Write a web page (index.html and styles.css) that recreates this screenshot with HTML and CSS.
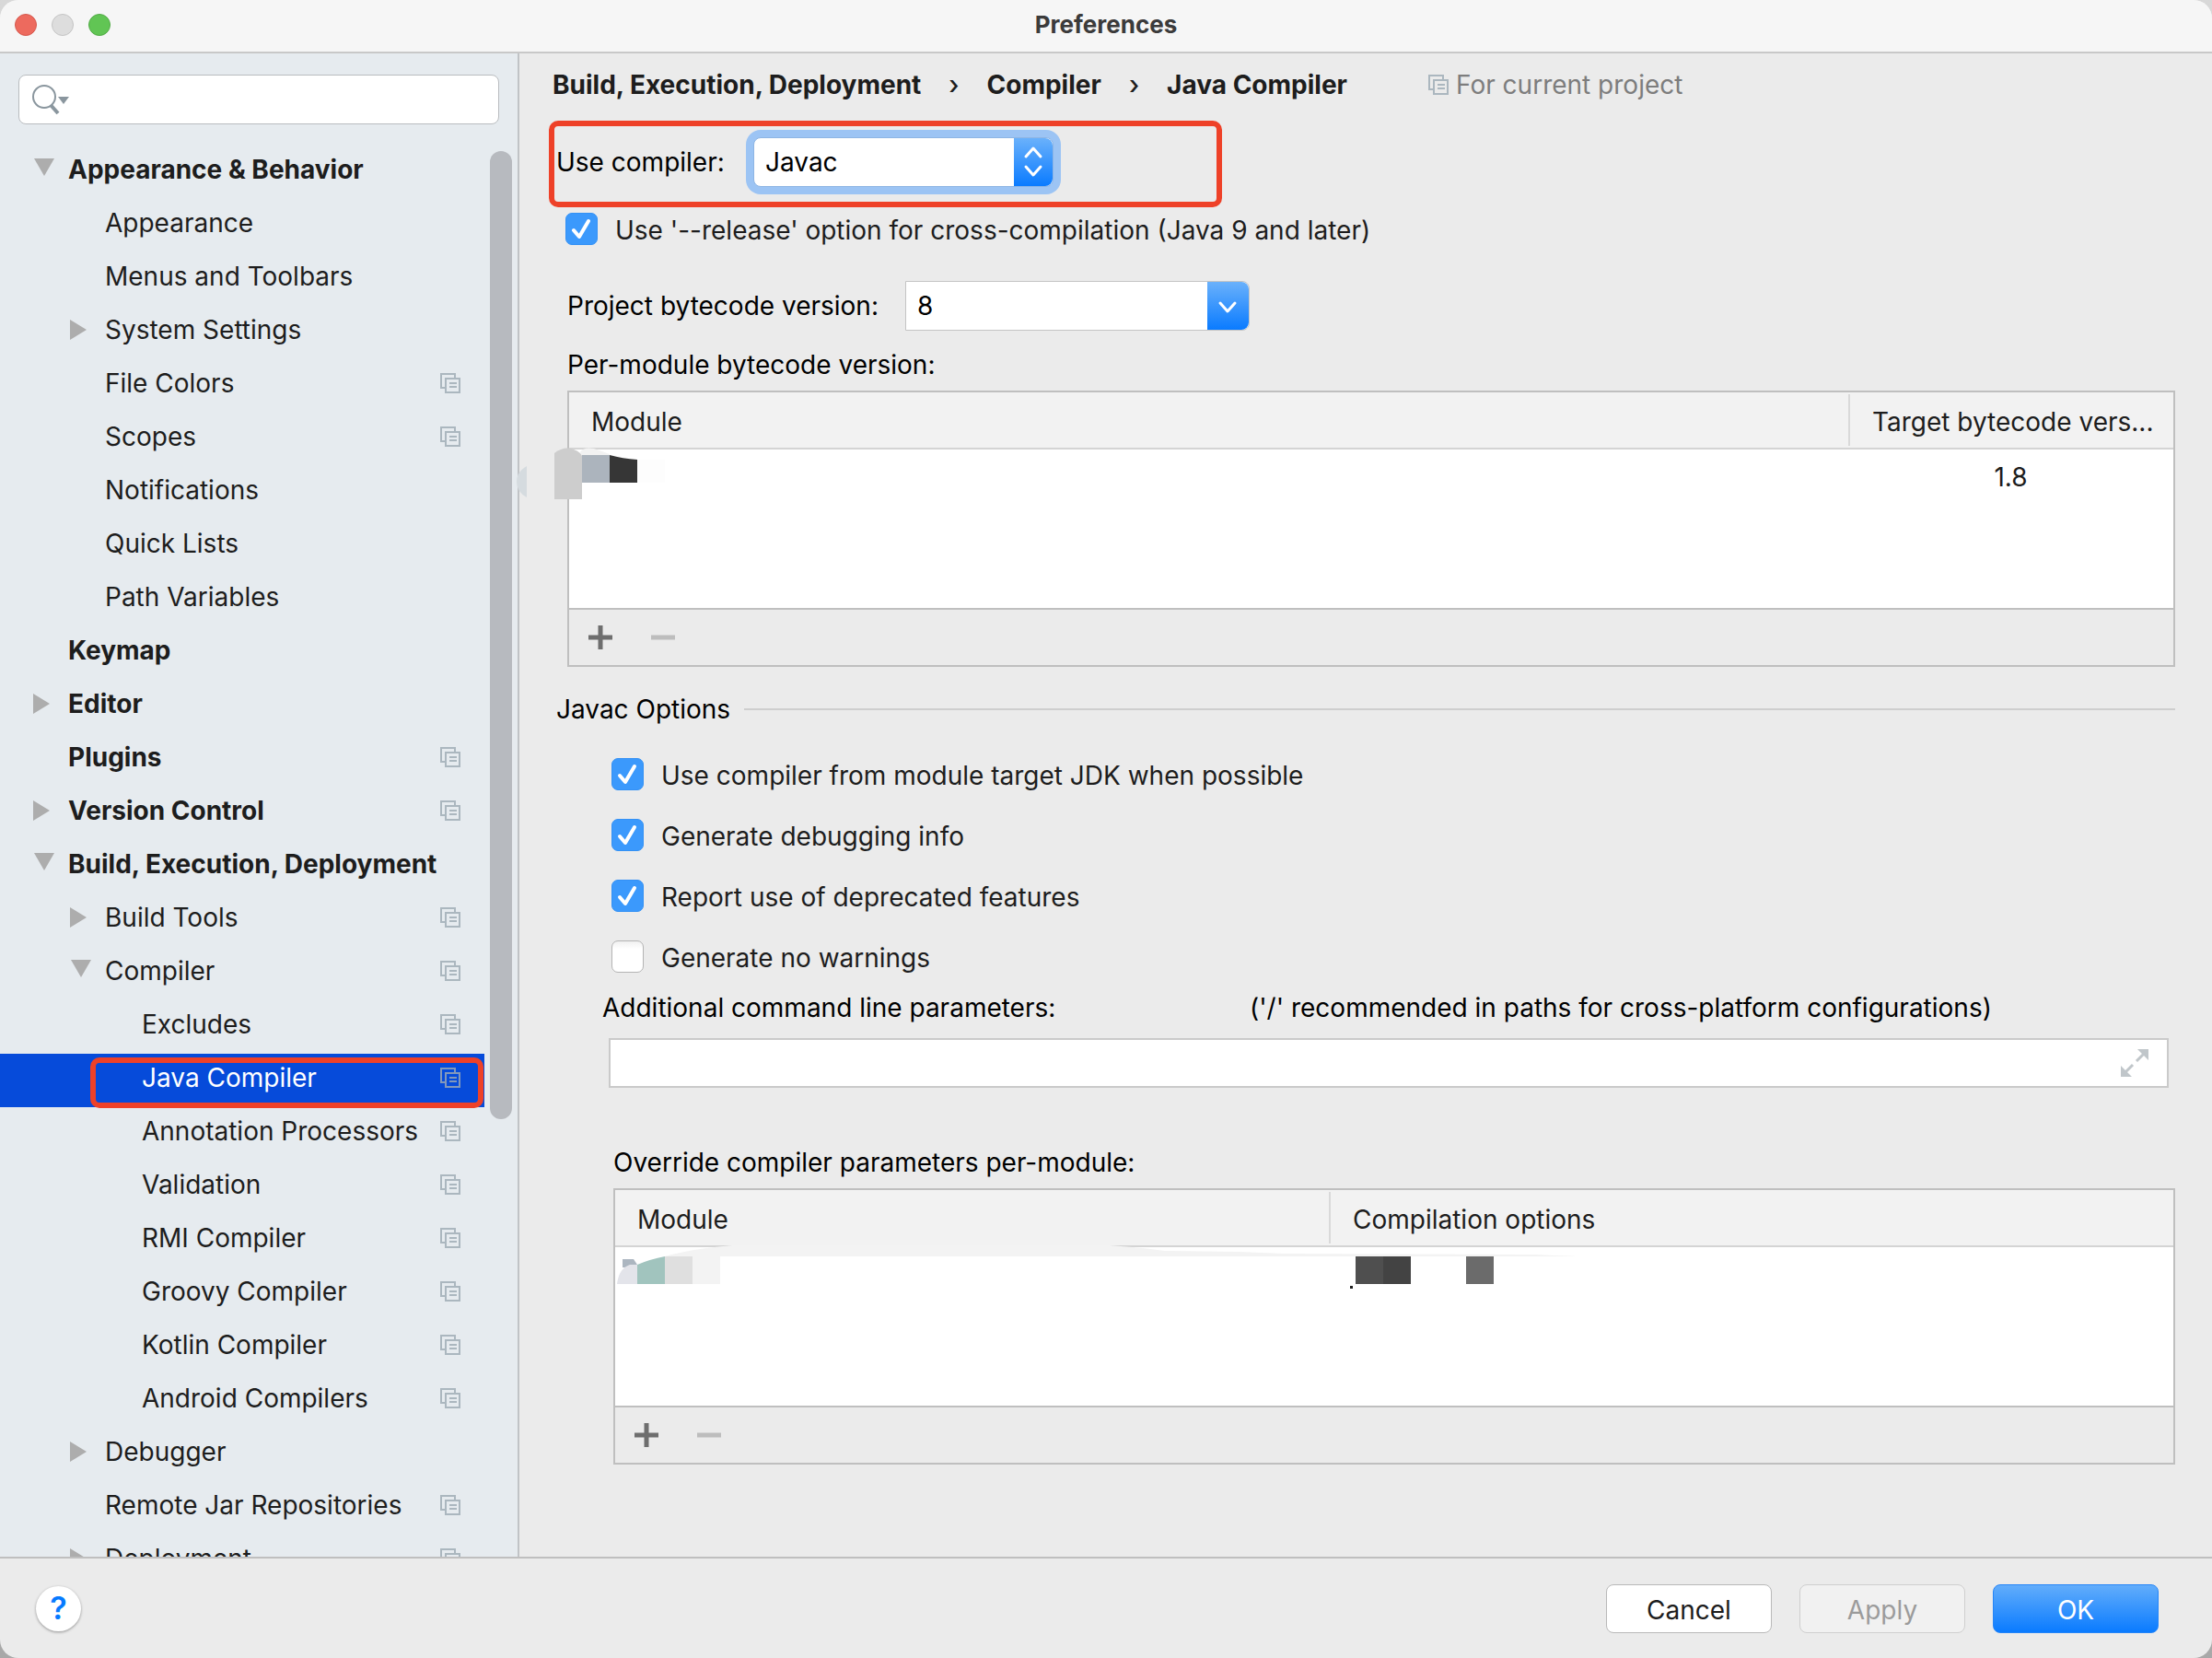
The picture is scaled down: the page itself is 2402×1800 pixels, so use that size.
FILE: index.html
```html
<!DOCTYPE html>
<html lang="en">
<head>
<meta charset="utf-8">
<title>Preferences</title>
<link rel="stylesheet" href="styles.css">
</head>
<body>
<svg class="defs" aria-hidden="true">
  <symbol id="copy" viewBox="0 0 22 22"><path d="M5 16H1V1h15v4" fill="none" stroke="currentColor" stroke-width="2"/><path d="M6 6h15v15H6z" fill="none" stroke="currentColor" stroke-width="2"/><path d="M10 11h8M10 15h8" stroke="currentColor" stroke-width="2"/></symbol>
  <symbol id="open" viewBox="0 0 24 24"><path d="M2 0h22L13 19z" fill="currentColor"/></symbol>
  <symbol id="closed" viewBox="0 0 24 24"><path d="M1 1v22l18-11z" fill="currentColor"/></symbol>
  <symbol id="check" viewBox="0 0 35 35"><path d="M9 19l6 7L25 9" fill="none" stroke="currentColor" stroke-width="4" stroke-linecap="round" stroke-linejoin="round"/></symbol>
  <symbol id="plus" viewBox="0 0 26 26"><path d="M13 0v26M0 13h26" stroke="currentColor" stroke-width="5"/></symbol>
  <symbol id="minus" viewBox="0 0 26 26"><path d="M0 13h26" stroke="currentColor" stroke-width="5"/></symbol>
</svg>
<div class="window">
  <header class="titlebar">
    <div class="lights"><button class="light close" aria-label="Close"></button><button class="light minimize" aria-label="Minimize"></button><button class="light zoom" aria-label="Zoom"></button></div>
    <h1 class="title">Preferences</h1>
  </header>
  <div class="content">
    <aside class="sidebar">
      <div class="search">
        <svg class="search-icon" viewBox="0 0 40 34" aria-hidden="true"><circle cx="13" cy="14" r="12" fill="none" stroke="#8a969e" stroke-width="2"/><path d="M20 23l8 9" stroke="#8a969e" stroke-width="4"/><path d="M28 14h12l-6 8z" fill="#8a969e"/></svg>
        <input class="search-input" type="text" aria-label="Search settings">
      </div>
      <nav class="tree" aria-label="Settings">
        <a class="row top" href="#"><svg class="twisty"><use href="#open"/></svg><span class="name">Appearance &amp; Behavior</span></a>
        <a class="row sub" href="#"><span class="twisty"></span><span class="name">Appearance</span></a>
        <a class="row sub" href="#"><span class="twisty"></span><span class="name">Menus and Toolbars</span></a>
        <a class="row sub" href="#"><svg class="twisty"><use href="#closed"/></svg><span class="name">System Settings</span></a>
        <a class="row sub" href="#"><span class="twisty"></span><span class="name">File Colors</span><svg class="copy"><use href="#copy"/></svg></a>
        <a class="row sub" href="#"><span class="twisty"></span><span class="name">Scopes</span><svg class="copy"><use href="#copy"/></svg></a>
        <a class="row sub" href="#"><span class="twisty"></span><span class="name">Notifications</span></a>
        <a class="row sub" href="#"><span class="twisty"></span><span class="name">Quick Lists</span></a>
        <a class="row sub" href="#"><span class="twisty"></span><span class="name">Path Variables</span></a>
        <a class="row top" href="#"><span class="twisty"></span><span class="name">Keymap</span></a>
        <a class="row top" href="#"><svg class="twisty"><use href="#closed"/></svg><span class="name">Editor</span></a>
        <a class="row top" href="#"><span class="twisty"></span><span class="name">Plugins</span><svg class="copy"><use href="#copy"/></svg></a>
        <a class="row top" href="#"><svg class="twisty"><use href="#closed"/></svg><span class="name">Version Control</span><svg class="copy"><use href="#copy"/></svg></a>
        <a class="row top" href="#"><svg class="twisty"><use href="#open"/></svg><span class="name">Build, Execution, Deployment</span></a>
        <a class="row sub" href="#"><svg class="twisty"><use href="#closed"/></svg><span class="name">Build Tools</span><svg class="copy"><use href="#copy"/></svg></a>
        <a class="row sub" href="#"><svg class="twisty"><use href="#open"/></svg><span class="name">Compiler</span><svg class="copy"><use href="#copy"/></svg></a>
        <a class="row leaf" href="#"><span class="twisty"></span><span class="name">Excludes</span><svg class="copy"><use href="#copy"/></svg></a>
        <a class="row leaf selected" href="#" aria-current="page"><span class="twisty"></span><span class="name">Java Compiler</span><svg class="copy"><use href="#copy"/></svg><span class="marker"></span></a>
        <a class="row leaf" href="#"><span class="twisty"></span><span class="name">Annotation Processors</span><svg class="copy"><use href="#copy"/></svg></a>
        <a class="row leaf" href="#"><span class="twisty"></span><span class="name">Validation</span><svg class="copy"><use href="#copy"/></svg></a>
        <a class="row leaf" href="#"><span class="twisty"></span><span class="name">RMI Compiler</span><svg class="copy"><use href="#copy"/></svg></a>
        <a class="row leaf" href="#"><span class="twisty"></span><span class="name">Groovy Compiler</span><svg class="copy"><use href="#copy"/></svg></a>
        <a class="row leaf" href="#"><span class="twisty"></span><span class="name">Kotlin Compiler</span><svg class="copy"><use href="#copy"/></svg></a>
        <a class="row leaf" href="#"><span class="twisty"></span><span class="name">Android Compilers</span><svg class="copy"><use href="#copy"/></svg></a>
        <a class="row sub" href="#"><svg class="twisty"><use href="#closed"/></svg><span class="name">Debugger</span></a>
        <a class="row sub" href="#"><span class="twisty"></span><span class="name">Remote Jar Repositories</span><svg class="copy"><use href="#copy"/></svg></a>
        <a class="row sub" href="#"><svg class="twisty"><use href="#closed"/></svg><span class="name">Deployment</span><svg class="copy"><use href="#copy"/></svg></a>
        <span class="scroll-thumb"></span>
      </nav>
    </aside>
    <main class="panel">
      <div class="heading">
        <nav class="crumbs" aria-label="Breadcrumb"><span>Build, Execution, Deployment</span><span class="sep">›</span><span>Compiler</span><span class="sep">›</span><span>Java Compiler</span></nav>
        <span class="scope"><svg class="copy"><use href="#copy"/></svg>For current project</span>
      </div>
      <div class="compiler">
        <label for="compiler">Use compiler:</label>
        <span class="combo focused">
          <select id="compiler"><option>Javac</option></select>
          <svg class="combo-button" viewBox="0 0 42 52" aria-hidden="true"><path d="M13 20l8-9 8 9M13 31l8 9 8-9" fill="none" stroke="#fff" stroke-width="3" stroke-linecap="round" stroke-linejoin="round"/></svg>
        </span>
        <span class="marker"></span>
      </div>
      <div class="general">
        <label class="check"><span class="box"><input type="checkbox" checked><svg><use href="#check"/></svg></span><span class="check-text">Use '--release' option for cross-compilation (Java 9 and later)</span></label>
        <div class="version">
          <label for="bytecode">Project bytecode version:</label>
          <span class="combo">
            <select id="bytecode"><option>8</option></select>
            <svg class="combo-button" viewBox="0 0 45 52" aria-hidden="true"><path d="M14 23l8 9 8-9" fill="none" stroke="#fff" stroke-width="3" stroke-linecap="round" stroke-linejoin="round"/></svg>
          </span>
        </div>
        <p class="caption">Per-module bytecode version:</p>
        <div class="grid">
          <div class="grid-body">
            <table class="bytecode-table">
              <thead><tr><th><span>Module</span></th><th class="target"><span>Target bytecode vers...</span></th></tr></thead>
              <tbody><tr><td></td><td class="value">1.8</td></tr></tbody>
            </table>
          </div>
          <div class="toolbar"><button aria-label="Add"><svg><use href="#plus"/></svg></button><button aria-label="Remove" disabled><svg><use href="#minus"/></svg></button></div>
          <svg class="mosaic" width="166" height="56" viewBox="0 0 166 56" aria-hidden="true"><path d="M12 20Q1 26 1 37T12 54z" fill="#d5dbdf"/><path d="M42 56V6Q56-5 70 6l2 2v48z" fill="#cdcdcd"/><path d="M70 5Q73-1 85 1l17 6v2H72z" fill="#f2f2f2"/><path d="M72 8h30v30H72z" fill="#acb4bd"/><path d="M102 8q14 4 30 5v25h-30z" fill="#363636"/><path d="M132 13h30v25h-30z" fill="#fdfdfd"/></svg>
        </div>
      </div>
      <section class="options">
        <h2 class="legend"><span>Javac Options</span></h2>
        <div class="checks">
          <label class="check"><span class="box"><input type="checkbox" checked><svg><use href="#check"/></svg></span><span class="check-text">Use compiler from module target JDK when possible</span></label>
          <label class="check"><span class="box"><input type="checkbox" checked><svg><use href="#check"/></svg></span><span class="check-text">Generate debugging info</span></label>
          <label class="check"><span class="box"><input type="checkbox" checked><svg><use href="#check"/></svg></span><span class="check-text">Report use of deprecated features</span></label>
          <label class="check"><span class="box"><input type="checkbox"></span><span class="check-text">Generate no warnings</span></label>
        </div>
        <div class="params-head"><label for="params">Additional command line parameters:</label><span>('/' recommended in paths for cross-platform configurations)</span></div>
        <div class="params">
          <input id="params" type="text">
          <button class="expand" aria-label="Expand"><svg viewBox="0 0 30 30"><path d="M18 0h12v12zM0 18v12h12z" fill="#c0c6ca"/><path d="M26 4l-9 9M4 26l9-9" stroke="#c0c6ca" stroke-width="3"/></svg></button>
        </div>
        <div class="override">
          <p class="caption">Override compiler parameters per-module:</p>
          <div class="grid">
            <div class="grid-body">
              <table class="override-table">
                <thead><tr><th class="module"><span>Module</span></th><th><span>Compilation options</span></th></tr></thead>
                <tbody><tr><td></td><td></td></tr></tbody>
              </table>
            </div>
            <div class="toolbar"><button aria-label="Add"><svg><use href="#plus"/></svg></button><button aria-label="Remove" disabled><svg><use href="#minus"/></svg></button></div>
            <svg class="mosaic wide" width="1040" height="50" viewBox="0 0 1040 50" aria-hidden="true"><path d="M52 12Q80 4 125 0h410q30 2 60 6l80 1 50 2 270 1q25 1 50 2z" fill="#f3f3f3"/><path d="M6 15h12l6 9H6z" fill="#acb6c0"/><path d="M0 42Q2 25 14 21h8v21z" fill="#e3e4ea"/><path d="M22 21q14-6 30-9v30H22z" fill="#a1c4be"/><path d="M52 12h30v30H52z" fill="#dfdfdf"/><path d="M82 12h30v30H82z" fill="#f3f3f3"/><path d="M802 12h30v30h-30z" fill="#4f4f4f"/><path d="M832 12h30v30h-30z" fill="#434343"/><path d="M922 12h30v30h-30z" fill="#6b6b6b"/><path d="M796 44h3v3h-3z" fill="#1d1d1d"/></svg>
          </div>
        </div>
      </section>
    </main>
  </div>
  <footer class="footer">
    <button class="help" aria-label="Help">?</button>
    <button class="button">Cancel</button>
    <button class="button" disabled>Apply</button>
    <button class="button primary">OK</button>
  </footer>
</div>
</body>
</html>
```
FILE: styles.css
```css
* { box-sizing: border-box; }
body {
  margin: 0;
  background: linear-gradient(#d8d8d8, #a8a8a8);
  color: #000;
  font: 28px/36px Inter, "Liberation Sans", sans-serif;
}
button, input, select { font: inherit; color: inherit; }
h1, h2, p { margin: 0; font: inherit; }
.defs { display: none; }
svg { display: block; }

.window {
  display: flex;
  flex-direction: column;
  height: 100vh;
  min-height: 600px;
  border-radius: 20px;
  overflow: hidden;
  background: #ebebeb;
}

/* Title bar */
.titlebar {
  display: grid;
  grid-template-columns: 1fr auto 1fr;
  align-items: center;
  height: 58px;
  padding: 0 16px 2px;
  background: #f6f6f6;
  border-bottom: 2px solid #c8c8c8;
}
.lights { display: flex; gap: 16px; }
.light {
  width: 24px;
  height: 24px;
  padding: 0;
  border: 1px solid;
  border-radius: 50%;
}
.close { background: #ed6a5e; border-color: #d5594e; }
.minimize { background: #dddddd; border-color: #c4c4c4; }
.zoom { background: #61c554; border-color: #52aa46; }
.title { font-size: 26px; font-weight: 700; color: #3b3b3b; }

.content { display: flex; flex: 1; min-height: 0; }

/* Sidebar */
.sidebar {
  display: flex;
  flex-direction: column;
  width: 564px;
  flex: none;
  padding-top: 23px;
  background: #e6ebef;
  border-right: 2px solid #c0c3c6;
}
.search {
  display: flex;
  align-items: center;
  gap: 8px;
  height: 54px;
  margin: 0 20px;
  padding: 0 14px;
  background: #fff;
  border: 1px solid #b9bcbf;
  border-radius: 8px;
}
.search-icon { width: 40px; height: 34px; flex: none; }
.search-input { flex: 1; min-width: 0; border: 0; outline: 0; background: none; }
.tree {
  position: relative;
  flex: 1;
  min-height: 0;
  margin-top: 23px;
  overflow: hidden;
}
.row {
  position: relative;
  display: flex;
  align-items: center;
  height: 58px;
  margin-right: 36px;
  padding: 0 26px 6px 35px;
  color: #1d1d1d;
  text-decoration: none;
  white-space: nowrap;
}
.row.top { font-weight: 700; }
.row.sub { padding-left: 75px; }
.row.leaf { padding-left: 115px; }
.row.selected { background: #064bda; color: #fff; }
.twisty { width: 24px; height: 24px; flex: none; margin-right: 15px; color: #adadad; }
.name { flex: 1; }
.copy { width: 22px; height: 22px; flex: none; color: #abb7bf; }
.selected .copy { color: #8298bb; }
.marker {
  position: absolute;
  inset: 0 0 -4px;
  border: 6px solid #ee4128;
  border-radius: 10px;
  pointer-events: none;
}
.row .marker { inset: 4px 1px -1px 98px; }
.scroll-thumb {
  position: absolute;
  top: 6px;
  right: 6px;
  width: 24px;
  height: 68.6%;
  border-radius: 12px;
  background: #b7babf;
}

/* Settings panel */
.panel { flex: 1; min-width: 0; padding: 0 40px 0 32px; }
.heading { display: flex; align-items: center; gap: 88px; height: 68px; padding-left: 4px; }
.crumbs { display: flex; gap: 30px; font-weight: 700; color: #1d1d1d; }
.sep { font-weight: 500; }
.scope { display: flex; align-items: center; gap: 8px; color: #7d7d7d; }
.compiler {
  position: relative;
  display: flex;
  align-items: center;
  gap: 28px;
  width: 731px;
  height: 90px;
  margin-top: 5px;
  padding-left: 8px;
}
.compiler label { min-width: 186px; }
.combo {
  display: flex;
  width: 374px;
  height: 54px;
  border: 1px solid #c4c4c4;
  border-radius: 0 8px 8px 0;
  background: #fff;
}
.combo select {
  flex: 1;
  min-width: 0;
  padding: 0 12px;
  border: 0;
  outline: 0;
  appearance: none;
  background: none;
}
.combo-button {
  width: 45px;
  height: 52px;
  flex: none;
  border-radius: 0 8px 8px 0;
  background: linear-gradient(#6ab1fb, #0a7bff);
}
.combo.focused {
  width: 326px;
  border-radius: 8px;
  border-color: #8db5e4;
  box-shadow: 0 0 0 8px #9cc4f4;
}
.focused .combo-button { width: 42px; }

.check { display: flex; align-items: center; gap: 19px; height: 36px; color: #1d1d1d; }
.box { display: grid; width: 35px; height: 35px; }
.box > * { grid-area: 1 / 1; width: 35px; height: 35px; }
.box svg { color: #fff; pointer-events: none; }
.box input {
  margin: 0;
  appearance: none;
  border: 1px solid #b4b4b4;
  border-radius: 7px;
  background: linear-gradient(#f0f0f0, #fff 8px);
}
.box input:checked { background: #3b99fc; border-color: #3491f5; }
.check-text { padding-top: 4px; }

.general { padding: 9px 0 0 20px; }
.general .check { margin-left: -2px; }
.version { display: flex; align-items: center; gap: 20px; height: 54px; margin-top: 39px; }
.version label { min-width: 347px; }
.version .combo { margin-right: auto; }
.general .caption { margin-top: 19px; }

.grid {
  position: relative;
  margin-top: 10px;
  border: 2px solid #bfbfbf;
}
.grid-body { height: 236px; background: #fff; border-bottom: 2px solid #bfbfbf; }
table { width: 100%; border-collapse: separate; border-spacing: 0; table-layout: fixed; color: #1d1d1d; }
th {
  height: 62px;
  padding: 2px 0;
  font-weight: 400;
  text-align: left;
  white-space: nowrap;
  background: #f2f2f2;
  border-bottom: 2px solid #d4d4d4;
}
th span { display: block; padding: 12px 0 8px 24px; }
th + th span { border-left: 2px solid #d9d9d9; }
td { height: 60px; padding: 0; }
.target { width: 353px; }
.module { width: 775px; }
.value { text-align: center; }
.toolbar { display: flex; gap: 42px; height: 60px; padding-left: 21px; }
.toolbar button { padding: 0; border: 0; background: none; color: #6e6e6e; }
.toolbar button:disabled { color: #bdbdbd; }
.toolbar svg { width: 26px; height: 26px; }
.mosaic { position: absolute; left: -58px; top: 60px; }
.mosaic.wide { left: 2px; }

.legend { display: flex; align-items: center; gap: 14px; margin-top: 28px; padding-left: 8px; }
.legend span { min-width: 190px; }
.legend::after { content: ""; flex: 1; height: 2px; background: #cecece; }
.checks { display: grid; gap: 30px; margin: 34px 0 0 68px; }
.params-head { display: grid; grid-template-columns: 703px 1fr; margin: 20px 0 0 58px; }
.params {
  display: flex;
  align-items: center;
  height: 54px;
  margin: 15px 7px 0 65px;
  padding-right: 20px;
  background: #fff;
  border: 2px solid #cacaca;
}
.params input { flex: 1; height: 100%; border: 0; outline: 0; background: none; }
.expand { padding: 0; border: 0; background: none; }
.expand svg { width: 30px; height: 30px; }
.override { margin: 63px 0 0 70px; }

/* Footer */
.footer {
  display: flex;
  align-items: center;
  gap: 30px;
  height: 110px;
  padding: 0 58px 0 39px;
  border-top: 2px solid #bfbfbf;
}
.help {
  width: 49px;
  height: 49px;
  margin-right: auto;
  padding: 0;
  border: 0;
  border-radius: 50%;
  background: #fff;
  box-shadow: 0 1px 3px #00000060;
  color: #067aff;
  font-size: 34px;
  font-weight: 600;
}
.button {
  width: 180px;
  height: 53px;
  padding: 4px 0 0;
  border: 1px solid #b9b9b9;
  border-radius: 8px;
  background: #fff;
  color: #1d1d1d;
}
.button:disabled { background: #f1f1f1; border-color: #cfcfcf; color: #9b9b9b; }
.button.primary {
  border-color: #2585f8;
  background: linear-gradient(#62adfb, #0a7bff);
  color: #fff;
}
```
